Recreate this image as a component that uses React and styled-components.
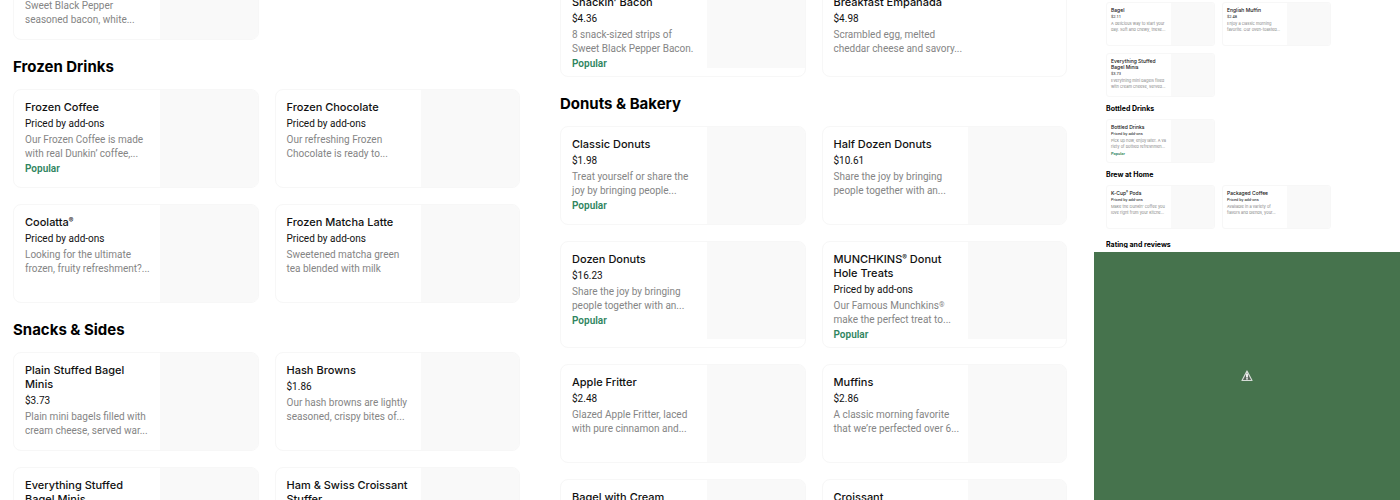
import { Fragment } from 'react';
import styled, { createGlobalStyle, ThemeProvider } from 'styled-components';

const GlobalStyle = createGlobalStyle`
  * {
    box-sizing: border-box;
  }
  body {
    margin: 0;
    background: #fff;
    color: #111;
    font-family: Roboto, "Liberation Sans", sans-serif;
  }
`

const large = {
  pad: 10,
  inset: 11,
  line: 14,
  titleGap: 3,
  descGap: 2,
  tagGap: 1,
  title: 11,
  price: 10,
  desc: 10,
  mark: 7,
  descFont: 'Roboto',
  heading: 15,
  headingLine: 24,
  headingTop: 15,
  headingBottom: 10,
  cardHeight: 99,
  image: 98,
  imageHeight: 97,
  gap: 16,
  radius: 8,
  bottom: 5,
}

const small = {
  pad: 4,
  inset: 4,
  line: 6,
  titleGap: 1,
  descGap: 1,
  tagGap: 1,
  title: 5,
  price: 4,
  desc: 4,
  mark: 3,
  descFont: 'Inter',
  heading: 7,
  headingLine: 10,
  headingTop: 7,
  headingBottom: 5,
  cardHeight: 44,
  image: 43,
  imageHeight: 42,
  gap: 7,
  radius: 3,
  bottom: 2,
}

const Page = styled.main`
  display: grid;
  grid-template-columns: 547fr 547fr 306fr;
  height: 100vh;
  overflow: hidden;
`

const Column = styled.div`
  min-width: 0;
  padding: 0 27px 0 13px;
  overflow: hidden;
`

const Scrolled = styled.div`
  margin-top: -${props => props.$by}px;
`

const SideColumn = styled.div`
  display: flex;
  flex-direction: column;
  min-width: 0;
`

const SideMenu = styled.div`
  padding: 2px 69px 0 12px;
`

const Heading = styled.h2`
  margin: 0;
  padding: ${({ theme }) => `${theme.headingTop}px 0 ${theme.headingBottom}px`};
  color: #000;
  font-family: Inter, "Liberation Sans", sans-serif;
  font-size: ${({ theme }) => theme.heading}px;
  font-weight: 700;
  line-height: ${({ theme }) => theme.headingLine}px;
  white-space: nowrap;
`

const ClippedHeading = styled(Heading)`
  height: 19px;
  padding: 11px 0 0;
  margin-bottom: 4px;
  overflow: hidden;
`

const Grid = styled.div`
  display: grid;
  grid-template-columns: 1fr 1fr;
  gap: ${({ theme }) => theme.gap}px;
`

const Card = styled.article`
  display: flex;
  justify-content: space-between;
  min-width: 0;
  min-height: ${({ theme }) => theme.cardHeight}px;
  border: 1px solid #f7f7f7;
  border-radius: ${({ theme }) => theme.radius}px;
  overflow: hidden;
`

const CardBody = styled.div`
  padding: ${({ theme }) => `${theme.pad}px 0 ${theme.bottom}px ${theme.inset}px`};
  line-height: ${({ theme }) => theme.line}px;
  white-space: pre;
`

const Lead = styled.div`
  height: ${props => props.$height}px;
`

const Title = styled.h3`
  margin: 0;
  font-family: Inter, "Liberation Sans", sans-serif;
  font-size: ${({ theme }) => theme.title}px;
  font-weight: 500;
`

const Price = styled.p`
  margin: ${({ theme }) => theme.titleGap}px 0 0;
  font-size: ${({ theme }) => theme.price}px;
`

const Description = styled.p`
  margin: ${({ theme }) => theme.descGap}px 0 0;
  color: #858585;
  font-family: ${({ theme }) => theme.descFont}, "Liberation Sans", sans-serif;
  font-size: ${({ theme }) => theme.desc}px;
`

const Popular = styled.p`
  margin: ${({ theme }) => theme.tagGap}px 0 0;
  color: #2f8560;
  font-size: ${({ theme }) => theme.desc}px;
  font-weight: 600;
`

const Mark = styled.span`
  font-size: ${({ theme }) => theme.mark}px;
  line-height: ${({ theme }) => theme.title}px;
  vertical-align: text-top;
`

const Thumb = styled.div`
  flex: none;
  width: ${({ theme }) => theme.image}px;
  height: ${({ theme }) => theme.imageHeight}px;
  background: #f9f9f9;
`

const MapArea = styled.div`
  flex: 1;
  display: flex;
  align-items: center;
  justify-content: center;
  background: #46734d;
`

const ADD_ONS = 'Priced by add-ons'

const firstColumn = [
  {
    items: [
      { lead: 45, desc: 'Sweet Black Pepper\nseasoned bacon, white...' },
    ],
  },
  {
    name: 'Frozen Drinks',
    items: [
      { title: 'Frozen Coffee', price: ADD_ONS, desc: 'Our Frozen Coffee is made\nwith real Dunkin’ coffee,...', popular: true },
      { title: 'Frozen Chocolate', price: ADD_ONS, desc: 'Our refreshing Frozen\nChocolate is ready to...' },
      { title: 'Coolatta®', price: ADD_ONS, desc: 'Looking for the ultimate\nfrozen, fruity refreshment?...' },
      { title: 'Frozen Matcha Latte', price: ADD_ONS, desc: 'Sweetened matcha green\ntea blended with milk' },
    ],
  },
  {
    name: 'Snacks & Sides',
    items: [
      { title: 'Plain Stuffed Bagel\nMinis', price: '$3.73', desc: 'Plain mini bagels filled with\ncream cheese, served war...' },
      { title: 'Hash Browns', price: '$1.86', desc: 'Our hash browns are lightly\nseasoned, crispy bites of...' },
      { title: 'Everything Stuffed\nBagel Minis' },
      { title: 'Ham & Swiss Croissant\nStuffer' },
    ],
  },
]

const secondColumn = [
  {
    items: [
      { lead: 14, title: 'Snackin’ Bacon', price: '$4.36', desc: '8 snack-sized strips of\nSweet Black Pepper Bacon.', popular: true },
      { lead: 14, title: 'Breakfast Empanada', price: '$4.98', desc: 'Scrambled egg, melted\ncheddar cheese and savory...', noImage: true },
    ],
  },
  {
    name: 'Donuts & Bakery',
    items: [
      { title: 'Classic Donuts', price: '$1.98', desc: 'Treat yourself or share the\njoy by bringing people...', popular: true },
      { title: 'Half Dozen Donuts', price: '$10.61', desc: 'Share the joy by bringing\npeople together with an...' },
      { title: 'Dozen Donuts', price: '$16.23', desc: 'Share the joy by bringing\npeople together with an...', popular: true },
      { title: 'MUNCHKINS® Donut\nHole Treats', price: ADD_ONS, desc: 'Our Famous Munchkins®\nmake the perfect treat to...', popular: true },
      { title: 'Apple Fritter', price: '$2.48', desc: 'Glazed Apple Fritter, laced\nwith pure cinnamon and...' },
      { title: 'Muffins', price: '$2.86', desc: 'A classic morning favorite\nthat we’re perfected over 6...' },
      { title: 'Bagel with Cream' },
      { title: 'Croissant' },
    ],
  },
]

const sideColumn = [
  {
    items: [
      { title: 'Bagel', price: '$2.11', desc: 'A delicious way to start your\nday. Soft and chewy, these...' },
      { title: 'English Muffin', price: '$2.48', desc: 'Enjoy a classic morning\nfavorite. Our oven-toasted...' },
      { title: 'Everything Stuffed\nBagel Minis', price: '$3.73', desc: 'Everything mini bagels filled\nwith cream cheese, served...' },
    ],
  },
  {
    name: 'Bottled Drinks',
    items: [
      { title: 'Bottled Drinks', price: ADD_ONS, desc: 'Pick up now, enjoy later. A va\nriety of bottled refreshmen...', popular: true },
    ],
  },
  {
    name: 'Brew at Home',
    items: [
      { title: 'K-Cup® Pods', price: ADD_ONS, desc: 'Make the Dunkin’ coffee you\nlove right from your kitche...' },
      { title: 'Packaged Coffee', price: ADD_ONS, desc: 'Available in a variety of\nflavors and blends, your...' },
    ],
  },
]

// the registered sign is set smaller than the text around it
const withMark = text => text.split('®').map((part, index) => (
  <Fragment key={index}>
    {index > 0 && <Mark>®</Mark>}
    {part}
  </Fragment>
))

const MenuItem = ({ lead, title, price, desc, popular, noImage }) => (
  <Card>
    <CardBody>
      {lead && <Lead $height={lead} />}
      {title && <Title>{withMark(title)}</Title>}
      {price && <Price>{price}</Price>}
      {desc && <Description>{withMark(desc)}</Description>}
      {popular && <Popular>Popular</Popular>}
    </CardBody>
    {!noImage && <Thumb />}
  </Card>
)

const Menu = ({ sections }) => sections.map((section, index) => (
  <Fragment key={index}>
    {section.name && <Heading>{section.name}</Heading>}
    <Grid>
      {section.items.map((item, i) => <MenuItem key={i} {...item} />)}
    </Grid>
  </Fragment>
))

const WarningIcon = () => (
  <svg width="12" height="12" viewBox="0 0 12 12" role="img" aria-label="Warning">
    <path d="M6 1 L11 10.5 H1 Z" fill="#59665c" stroke="#d5dcd6" strokeWidth="1.2" strokeLinejoin="round" />
    <path d="M6 3.5 V7.4 M6 8.2 V9.6" stroke="#fff" strokeWidth="1.8" />
  </svg>
)

const App = () => (
  <ThemeProvider theme={large}>
    <GlobalStyle />
    <Page>
      <Column>
        <Scrolled $by={59}>
          <Menu sections={firstColumn} />
        </Scrolled>
      </Column>
      <Column>
        <Scrolled $by={30}>
          <Menu sections={secondColumn} />
        </Scrolled>
      </Column>
      <ThemeProvider theme={small}>
        <SideColumn>
          <SideMenu>
            <Menu sections={sideColumn} />
            <ClippedHeading>Rating and reviews</ClippedHeading>
          </SideMenu>
          <MapArea>
            <WarningIcon />
          </MapArea>
        </SideColumn>
      </ThemeProvider>
    </Page>
  </ThemeProvider>
)

export default App;
